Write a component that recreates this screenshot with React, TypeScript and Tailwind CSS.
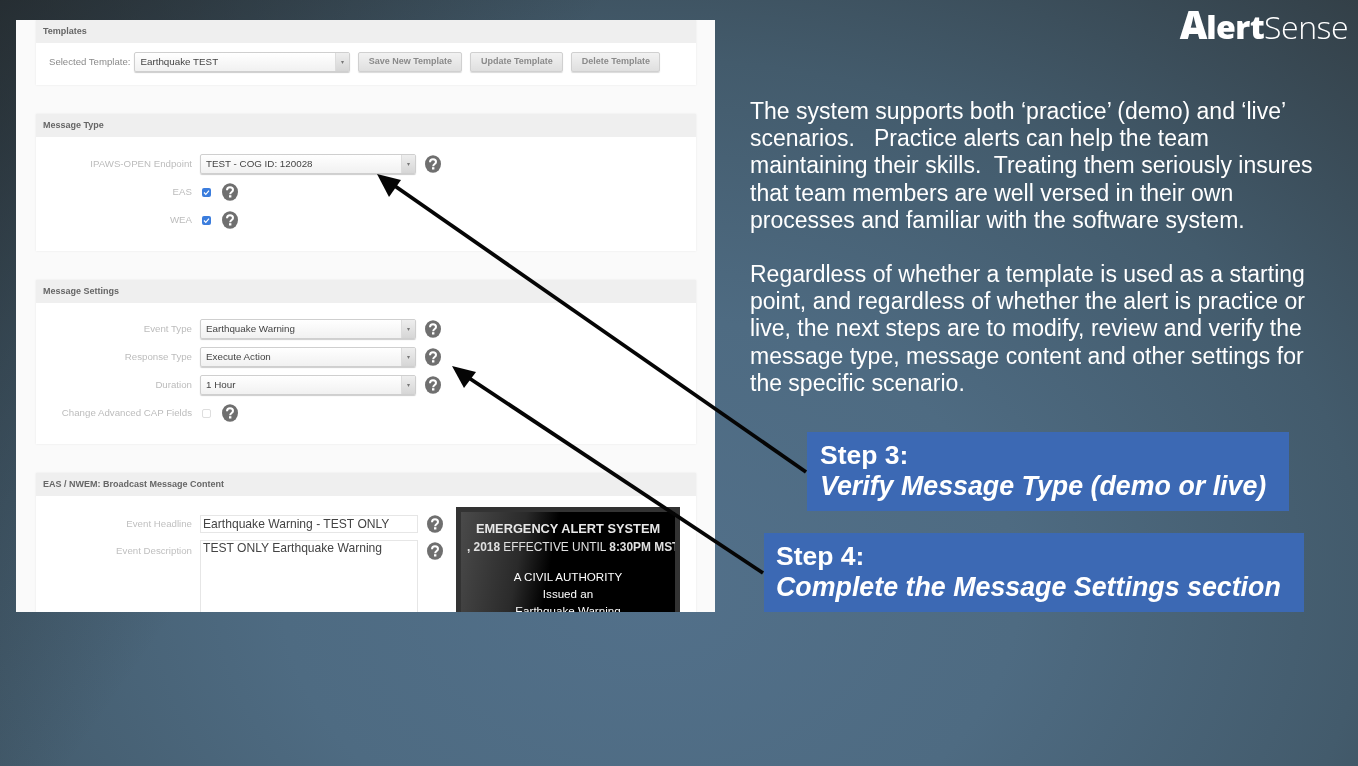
const Help = () => (
  <svg viewBox="0 0 18 18" className="w-[18px] h-[18px] shrink-0">
    <ellipse cx="9" cy="9" rx="8" ry="8.8" fill="#6f6f6f" />
    <path d="M6 7.2C6 5.3 7.3 4.2 9 4.2C10.8 4.2 12 5.3 12 6.9C12 8.9 9.2 9 9.2 11.2" fill="none" stroke="#fff" strokeWidth="2" />
    <rect x="8" y="12.2" width="2.4" height="2.3" fill="#fff" />
  </svg>
);

const Select = ({ value, className }: { value: string; className: string }) => (
  <div className={`flex h-5 items-stretch rounded-[2px] border border-[#cfcfcf] bg-gradient-to-b from-white to-[#f1f1f1] shadow-[0_1px_1px_rgba(0,0,0,0.2)] ${className}`}>
    <span className="flex-1 pl-[5px] text-[9.8px] leading-[18px] text-[#444]">{value}</span>
    <span className="flex w-[14px] items-center justify-center border-l border-[#dcdcdc] bg-gradient-to-b from-[#eeeeee] to-[#d6d6d6] text-[6px] text-[#777]">▾</span>
  </div>
);

const Row = ({ label, children }: { label: string; children: React.ReactNode }) => (
  <div className="flex h-5 items-center">
    <span className="w-[164px] pr-2 text-right text-[9.7px] text-[#bcbcbc]">{label}</span>
    {children}
  </div>
);

const SelectRow = ({ label, value }: { label: string; value: string }) => (
  <Row label={label}>
    <Select value={value} className="w-[216px]" />
    <span className="ml-[8px]"><Help /></span>
  </Row>
);

const Check = ({ checked }: { checked: boolean }) =>
  checked ? (
    <span className="ml-[2px] mr-[10px] flex h-[9px] w-[9px] items-center justify-center rounded-[2px] bg-[#3b7ddd]">
      <svg viewBox="0 0 9 9" className="h-[9px] w-[9px]"><path d="M2 4.5L3.8 6.4L7 2.6" fill="none" stroke="#fff" strokeWidth="1.2" /></svg>
    </span>
  ) : (
    <span className="ml-[2px] mr-[10px] h-[9px] w-[9px] rounded-[2px] border border-[#dedede] bg-white" />
  );

const Section = ({ title, className, children }: { title: string; className: string; children: React.ReactNode }) => (
  <section className={`bg-white shadow-[0_0_2px_rgba(0,0,0,0.08)] ${className}`}>
    <header className="flex h-[23px] items-center bg-[#efefef] pl-[7px] text-[9px] font-bold text-[#666]">{title}</header>
    {children}
  </section>
);

const Btn = ({ label, w }: { label: string; w: string }) => (
  <span className={`flex h-5 items-center justify-center rounded-[2px] border border-[#d0d0d0] bg-gradient-to-b from-[#f2f2f2] to-[#dfdfdf] text-[9px] font-bold text-[#8a8a8a] shadow-[0_1px_1px_rgba(0,0,0,0.15)] ${w}`}>{label}</span>
);

export default function App() {
  return (
    <div className="relative flex h-[766px] w-[1358px] overflow-hidden bg-[linear-gradient(125deg,rgba(28,32,34,0.6)_0%,rgba(28,32,34,0)_32%),radial-gradient(ellipse_1050px_780px_at_650px_590px,#52708a_0%,#4e6b82_35%,#435b6c_68%,#2e373c_112%)] pl-4 pt-5 font-['Liberation_Sans',Arial,sans-serif]">
      <main className="h-[592px] w-[699px] shrink-0 overflow-hidden bg-[#fafafa] pl-5 pr-[19px] blur-[0.5px]">
        <Section title="Templates" className="h-[65px]">
          <div className="mt-[9px] flex h-5 items-center pl-[13px]">
            <span className="mr-[4px] text-[9.6px] text-[#8a8a8a]">Selected Template:</span>
            <Select value="Earthquake TEST" className="w-[216px]" />
            <div className="ml-2 flex gap-2">
              <Btn label="Save New Template" w="w-[104px]" />
              <Btn label="Update Template" w="w-[93px]" />
              <Btn label="Delete Template" w="w-[89px]" />
            </div>
          </div>
        </Section>

        <Section title="Message Type" className="mt-[29px] h-[137px]">
          <div className="flex flex-col gap-2 pt-[17px]">
            <SelectRow label="IPAWS-OPEN Endpoint" value="TEST - COG ID: 120028" />
            <Row label="EAS"><Check checked /><Help /></Row>
            <Row label="WEA"><Check checked /><Help /></Row>
          </div>
        </Section>

        <Section title="Message Settings" className="mt-[29px] h-[164px]">
          <div className="flex flex-col gap-2 pt-4">
            <SelectRow label="Event Type" value="Earthquake Warning" />
            <SelectRow label="Response Type" value="Execute Action" />
            <SelectRow label="Duration" value="1 Hour" />
            <Row label="Change Advanced CAP Fields"><Check checked={false} /><Help /></Row>
          </div>
        </Section>

        <Section title="EAS / NWEM: Broadcast Message Content" className="mt-[29px] h-[160px]">
          <div className="flex pt-[11px]">
            <div className="flex flex-col gap-[7px] pt-[8px]">
              <div className="flex items-center">
                <span className="w-[164px] pr-2 text-right text-[9.7px] text-[#c0c0c0]">Event Headline</span>
                <span className="h-[18px] w-[218px] border border-[#e6e6e6] pl-[2px] text-[12.1px] leading-[16px] text-[#444]">Earthquake Warning - TEST ONLY</span>
                <span className="ml-[8px]"><Help /></span>
              </div>
              <div className="flex items-start">
                <span className="w-[164px] pr-2 pt-[4px] text-right text-[9.7px] text-[#c0c0c0]">Event Description</span>
                <span className="h-[100px] w-[218px] border border-[#e6e6e6] pl-[2px] text-[12.1px] leading-[15px] text-[#444]">TEST ONLY Earthquake Warning</span>
                <span className="ml-[8px] mt-[2px]"><Help /></span>
              </div>
            </div>
            <div className="ml-[12px] h-[130px] w-[224px] overflow-hidden border-[5px] border-[#333] bg-[linear-gradient(100deg,#4a4a4a_0%,#2a2a2a_28%,#000_42%,#000_100%)] pt-[8px] text-center text-white">
              <p className="text-[12.8px] font-bold leading-[17px] text-[#e8e8e8]">EMERGENCY ALERT SYSTEM</p>
              <p className="mt-[2px] overflow-hidden whitespace-nowrap pl-[6px] text-left text-[11.9px] leading-[16px] text-[#e0e0e0]"><b>, 2018</b> EFFECTIVE UNTIL <b>8:30PM MST</b></p>
              <p className="mt-[13px] text-[11.6px] leading-[17px]">A CIVIL AUTHORITY</p>
              <p className="text-[11.6px] leading-[17px]">Issued an</p>
              <p className="text-[11.6px] leading-[17px]">Earthquake Warning</p>
            </div>
          </div>
        </Section>
      </main>

      <aside className="ml-[35px] flex min-w-0 flex-1 flex-col blur-[0.4px]">
        <div className="-mt-[18px] flex h-[44px] items-baseline justify-end pr-[10px] font-['Open_Sans',sans-serif] leading-[44px] text-white">
          <span className="text-[38px] font-extrabold tracking-[-1px]">A</span>
          <span className="text-[32px] font-extrabold tracking-[-0.5px]">lert</span>
          <span className="text-[32px] font-light tracking-[-0.5px]">Sense</span>
        </div>
        <div className="mt-[52px] w-[590px] text-[23px] leading-[27.2px] text-white">
          <p>The system supports both ‘practice’ (demo) and ‘live’<br />scenarios.&nbsp;&nbsp; Practice alerts can help the team<br />maintaining their skills.&nbsp; Treating them seriously insures<br />that team members are well versed in their own<br />processes and familiar with the software system.</p>
          <p className="mt-[27px]">Regardless of whether a template is used as a starting<br />point, and regardless of whether the alert is practice or<br />live, the next steps are to modify, review and verify the<br />message type, message content and other settings for<br />the specific scenario.</p>
        </div>
        <div className="ml-[57px] mt-[35px] h-[79px] w-[482px] bg-[#3c69b4] pl-[13px] pt-[8px] font-bold leading-[31px] text-white">
          <p className="text-[26.5px]">Step 3:</p>
          <p className="text-[26.8px] italic">Verify Message Type (demo or live)</p>
        </div>
        <div className="ml-[14px] mt-[22px] h-[79px] w-[540px] bg-[#3c69b4] pl-[12px] pt-[8px] font-bold leading-[31px] text-white">
          <p className="text-[26.5px]">Step 4:</p>
          <p className="text-[26.8px] italic">Complete the Message Settings section</p>
        </div>
      </aside>

      <svg className="pointer-events-none absolute left-0 top-0 h-[766px] w-[1358px]" viewBox="0 0 1358 766">
        <path d="M806 472L392 184" stroke="#050505" strokeWidth="3.8" fill="none" />
        <path d="M377 174L401 180L389 197Z" fill="#050505" />
        <path d="M763 573L466 376" stroke="#050505" strokeWidth="3.8" fill="none" />
        <path d="M452 366L476 372L464 388Z" fill="#050505" />
      </svg>
    </div>
  );
}
